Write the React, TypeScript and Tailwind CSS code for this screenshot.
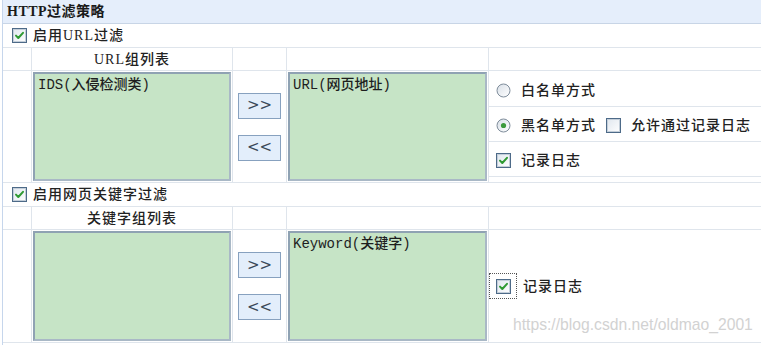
const LABEL_FONT = {
  fontFamily: '"Liberation Serif", "Noto Sans CJK SC", serif',
};
const MONO_FONT = {
  fontFamily: '"Liberation Mono", "Noto Sans CJK SC", monospace',
};

function CheckBox({ checked }: { checked: boolean }) {
  return (
    <svg width="15" height="15" viewBox="0 0 15 15" className="shrink-0">
      <defs>
        <linearGradient id="cbg" x1="0" y1="0" x2="1" y2="1">
          <stop offset="0" stopColor="#dfe6ee" />
          <stop offset="1" stopColor="#ffffff" />
        </linearGradient>
      </defs>
      <rect x="0.5" y="0.5" width="14" height="14" fill="url(#cbg)" stroke="#4d6a88" />
      <rect x="1.5" y="1.5" width="12" height="12" fill="none" stroke="#c3ced9" />
      {checked && (
        <path d="M4 7.6 L6.3 10 L11 4.8" fill="none" stroke="#2f9a32" strokeWidth="2" strokeLinecap="round" strokeLinejoin="round" />
      )}
    </svg>
  );
}

function Radio({ checked }: { checked: boolean }) {
  return (
    <svg width="15" height="15" viewBox="0 0 15 15" className="shrink-0">
      <defs>
        <linearGradient id="rbg" x1="0" y1="0" x2="1" y2="1">
          <stop offset="0" stopColor="#d8dfe7" />
          <stop offset="1" stopColor="#ffffff" />
        </linearGradient>
      </defs>
      <circle cx="7.5" cy="7.5" r="6.5" fill="url(#rbg)" stroke="#7f8d9b" />
      {checked && <circle cx="7.5" cy="7.5" r="2.6" fill="#3c9a3c" />}
    </svg>
  );
}

function ListBox({ text }: { text?: string }) {
  return (
    <div
      className="h-full w-full border-2 border-[#8fa2b3] border-r-[#a9b8c6] border-b-[#a9b8c6] bg-[#c6e4c6] px-[3px] pt-[2px] text-[14px] font-medium leading-[18px] text-[#1e1e1e]"
      style={MONO_FONT}
    >
      {text}
    </div>
  );
}

function MoveButtons() {
  return (
    <div className="flex h-full flex-col items-center justify-center gap-[16px] border-r border-b border-[#dfe5ec]">
      <button className="flex h-[26px] w-[43px] items-center justify-center border border-[#87a1bf] bg-[#e3eefb] text-[15px] text-[#3a4858]" style={{ fontFamily: '"DejaVu Sans", sans-serif' }}>
        &gt;&gt;
      </button>
      <button className="flex h-[26px] w-[43px] items-center justify-center border border-[#87a1bf] bg-[#e3eefb] text-[15px] text-[#3a4858]" style={{ fontFamily: '"DejaVu Sans", sans-serif' }}>
        &lt;&lt;
      </button>
    </div>
  );
}

function EnableRow({ label }: { label: string }) {
  return (
    <div className="flex h-[24px] items-center gap-[6px] border-b border-[#dfe5ec] pl-[9px]">
      <CheckBox checked />
      <span className="text-[14px] font-medium tracking-[1px] text-[#222]" style={LABEL_FONT}>
        {label}
      </span>
    </div>
  );
}

function HeaderRow({ title }: { title: string }) {
  return (
    <div className="grid h-[23px] grid-cols-[29px_201px_54px_202px_1fr]">
      <div className="border-r border-b border-[#dfe5ec]" />
      <div className="flex items-center justify-center border-r border-b border-[#dfe5ec] text-[14px] font-medium tracking-[1px] text-[#222]" style={LABEL_FONT}>
        {title}
      </div>
      <div className="border-r border-b border-[#dfe5ec]" />
      <div className="border-r border-b border-[#dfe5ec]" />
      <div className="border-b border-[#dfe5ec]" />
    </div>
  );
}

function OptionRow({ children, h }: { children: React.ReactNode; h: string }) {
  return (
    <div className={`flex items-center gap-[10px] border-b border-[#dfe5ec] pl-[7px] pt-[3px] ${h}`}>
      {children}
    </div>
  );
}

export default function App() {
  const text = "text-[14px] font-medium tracking-[1px] text-[#222]";
  return (
    <div className="h-[345px] w-[761px] overflow-hidden bg-white pl-[2px]">
      <div className="h-full border-l border-[#c6d6ec]">
        <div className="flex h-[24px] items-center border-b border-[#c8d5e6] bg-[#e5eefb] pl-[4px]">
          <span className="text-[14px] font-bold tracking-[0.5px] text-[#1a1a1a]" style={LABEL_FONT}>
            HTTP过滤策略
          </span>
        </div>

        <EnableRow label="启用URL过滤" />
        <HeaderRow title="URL组列表" />
        <div className="grid h-[112px] grid-cols-[29px_201px_54px_202px_1fr]">
          <div className="border-r border-b border-[#dfe5ec]" />
          <div className="border-r border-b border-[#dfe5ec] p-px">
            <ListBox text="IDS(入侵检测类)" />
          </div>
          <MoveButtons />
          <div className="border-r border-b border-[#dfe5ec] p-px">
            <ListBox text="URL(网页地址)" />
          </div>
          <div className="flex flex-col border-b border-[#dfe5ec]">
            <OptionRow h="h-[36px]">
              <Radio checked={false} />
              <span className={text} style={LABEL_FONT}>白名单方式</span>
            </OptionRow>
            <OptionRow h="h-[35px]">
              <Radio checked />
              <span className={text} style={LABEL_FONT}>黑名单方式</span>
              <CheckBox checked={false} />
              <span className={text} style={LABEL_FONT}>允许通过记录日志</span>
            </OptionRow>
            <OptionRow h="h-[35px]">
              <CheckBox checked />
              <span className={text} style={LABEL_FONT}>记录日志</span>
            </OptionRow>
          </div>
        </div>

        <EnableRow label="启用网页关键字过滤" />
        <HeaderRow title="关键字组列表" />
        <div className="grid h-[113px] grid-cols-[29px_201px_54px_202px_1fr]">
          <div className="border-r border-b border-[#dfe5ec]" />
          <div className="border-r border-b border-[#dfe5ec] p-px">
            <ListBox />
          </div>
          <MoveButtons />
          <div className="border-r border-b border-[#dfe5ec] p-px">
            <ListBox text="Keyword(关键字)" />
          </div>
          <div className="relative flex items-center border-b border-[#dfe5ec]">
            <div className="flex items-center gap-[6px]">
              <div className="flex h-[26px] w-[28px] items-center justify-center border border-dotted border-[#555]">
                <CheckBox checked />
              </div>
              <span className={text} style={LABEL_FONT}>记录日志</span>
            </div>
            <span
              className="absolute bottom-[5px] left-[24px] text-[15.7px] text-[#d2d2d2]"
              style={{ fontFamily: '"Liberation Sans", sans-serif' }}
            >
              https://blog.csdn.net/oldmao_2001
            </span>
          </div>
        </div>
      </div>
    </div>
  );
}
